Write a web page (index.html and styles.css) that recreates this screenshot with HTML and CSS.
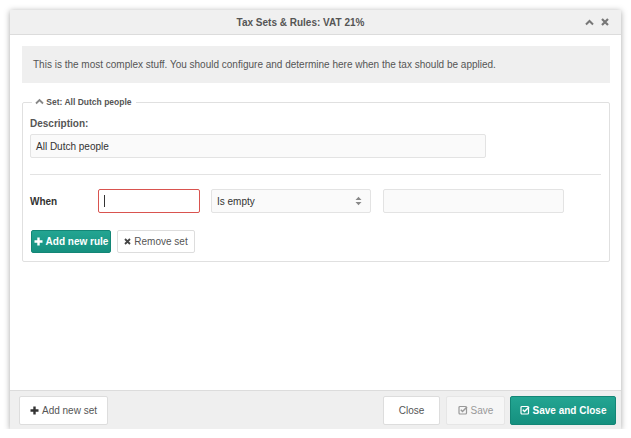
FILE: index.html
```html
<!DOCTYPE html>
<html>
<head>
<meta charset="utf-8">
<link rel="stylesheet" href="styles.css">
</head>
<body>
<div class="dialog">
  <div class="dlg-header">
    <span class="dlg-title">Tax Sets &amp; Rules: VAT 21%</span>
    <span class="dlg-tools">
      <svg width="9" height="7" viewBox="0 0 9 7"><path d="M1 5.5 L4.5 2 L8 5.5" fill="none" stroke="#777" stroke-width="2"/></svg>
      <svg width="8" height="8" viewBox="0 0 8 8"><path d="M1 1 L7 7 M7 1 L1 7" stroke="#777" stroke-width="2.2"/></svg>
    </span>
  </div>
  <div class="dlg-body">
    <div class="info">This is the most complex stuff. You should configure and determine here when the tax should be applied.</div>
    <fieldset class="set">
      <legend><svg width="9" height="7" viewBox="0 0 9 7"><path d="M1 5.5 L4.5 2 L8 5.5" fill="none" stroke="#888" stroke-width="1.8"/></svg> Set: All Dutch people</legend>
      <div class="label">Description:</div>
      <div class="input desc">All Dutch people</div>
      <div class="sep"></div>
      <div class="rule">
        <div class="when">When</div>
        <div class="input field error"><span class="caret"></span></div>
        <div class="input select">Is empty
          <svg class="arrows" width="7" height="10" viewBox="0 0 7 10"><path d="M0.5 4 L3.5 0.8 L6.5 4 Z M0.5 6 L3.5 9.2 L6.5 6 Z" fill="#888"/></svg>
        </div>
        <div class="input value"></div>
      </div>
      <div class="actions">
        <button class="btn teal small addrule"><svg width="9" height="9" viewBox="0 0 9 9"><path d="M4.5 0.5 V8.5 M0.5 4.5 H8.5" stroke="#fff" stroke-width="2.4"/></svg> Add new rule</button>
        <button class="btn plain small removeset"><svg width="7" height="7" viewBox="0 0 7 7"><path d="M1 1 L6 6 M6 1 L1 6" stroke="#444" stroke-width="1.8"/></svg> Remove set</button>
      </div>
    </fieldset>
  </div>
  <div class="dlg-footer">
    <button class="btn plain big addset"><svg width="9" height="9" viewBox="0 0 9 9"><path d="M4.5 0.5 V8.5 M0.5 4.5 H8.5" stroke="#333" stroke-width="2.4"/></svg> Add new set</button>
    <div class="spacer"></div>
    <button class="btn plain big close">Close</button>
    <button class="btn disabled big save"><svg width="10" height="10" viewBox="0 0 10 10"><rect x="1" y="1.5" width="7.5" height="7.5" rx="1" fill="none" stroke="#999" stroke-width="1.2"/><path d="M2.8 4.8 L4.5 6.5 L9 2" fill="none" stroke="#999" stroke-width="1.5"/></svg> Save</button>
    <button class="btn teal big saveclose"><svg width="10" height="10" viewBox="0 0 10 10"><rect x="1" y="1.5" width="7.5" height="7.5" rx="1" fill="none" stroke="#fff" stroke-width="1.2"/><path d="M2.8 4.8 L4.5 6.5 L9 2" fill="none" stroke="#fff" stroke-width="1.5"/></svg> Save and Close</button>
  </div>
</div>
</body>
</html>
```
FILE: styles.css
```css
html, body {
  margin: 0;
  padding: 0;
  background: #fff;
  font-family: "Liberation Sans", Arial, sans-serif;
  color: #555;
}
.dialog {
  margin: 10px 0 0 10px;
  width: 611px;
  height: 419px;
  display: flex;
  flex-direction: column;
  box-shadow: 0 1px 6px rgba(0,0,0,0.35);
  background: #fff;
}
.dlg-header {
  height: 24px;
  background: #f0f0f0;
  border-bottom: 1px solid #dcdcdc;
  display: flex;
  align-items: center;
  justify-content: center;
  position: relative;
  padding-right: 30px;
}
.dlg-title {
  font-size: 10px;
  font-weight: bold;
  color: #555;
}
.dlg-tools {
  position: absolute;
  right: 12px;
  top: 8px;
  display: flex;
  gap: 7px;
  align-items: center;
}
.dlg-body {
  flex: 1;
  padding: 11px 11px 0 12px;
}
.info {
  height: 37px;
  line-height: 37px;
  background: #efefef;
  padding: 0 11px;
  font-size: 10px;
  color: #555;
}
.set {
  margin: 14px 0 0 0;
  border: 1px solid #e0e0e0;
  border-radius: 2px;
  padding: 0 8px 8px 7px;
}
.set legend {
  font-size: 8.5px;
  font-weight: bold;
  color: #555;
  padding: 0 4px 0 3px;
  margin-left: 2px;
}
.label {
  font-size: 10px;
  font-weight: bold;
  color: #555;
  margin-top: 10px;
  line-height: 13px;
}
.input {
  box-sizing: border-box;
  height: 24px;
  border: 1px solid #e3e3e3;
  border-radius: 2px;
  background: #fafafa;
  font-size: 10px;
  color: #333;
  display: flex;
  align-items: center;
  padding: 0 5px;
}
.desc {
  width: 456px;
  margin-top: 4px;
}
.sep {
  height: 1px;
  background: #e3e3e3;
  margin: 16px 0 0 0;
}
.rule {
  display: flex;
  align-items: center;
  margin-top: 14px;
}
.when {
  width: 68px;
  font-size: 10px;
  font-weight: bold;
  color: #333;
}
.field {
  width: 102px;
  margin-right: 11px;
}
.error {
  border: 1px solid #d9534f;
  background: #fff;
}
.caret {
  display: block;
  width: 1px;
  height: 12px;
  background: #333;
}
.select {
  width: 160px;
  margin-right: 12px;
  justify-content: space-between;
  padding-right: 8px;
}
.value {
  width: 181px;
}
.actions {
  display: flex;
  gap: 6px;
  margin-top: 17px;
  margin-left: 1px;
}
.btn {
  box-sizing: border-box;
  font-family: "Liberation Sans", Arial, sans-serif;
  border-radius: 2px;
  display: flex;
  align-items: center;
  justify-content: center;
  gap: 3px;
  cursor: pointer;
  white-space: nowrap;
  padding: 0;
}
.small {
  height: 23px;
  font-size: 10px;
}
.big {
  height: 29px;
  font-size: 10px;
}
.addrule { width: 80px; }
.removeset { width: 78px; }
.teal {
  background: linear-gradient(#23a592, #15907f);
  border: 1px solid #138676;
  color: #fff;
  font-weight: bold;
}
.plain {
  background: #fff;
  border: 1px solid #ddd;
  color: #555;
}
.disabled {
  background: #f6f6f6;
  border: 1px solid #e6e6e6;
  color: #999;
}
.dlg-footer {
  height: 39px;
  background: #efefef;
  border-top: 1px solid #dcdcdc;
  box-sizing: border-box;
  display: flex;
  align-items: center;
  padding: 0 5px 0 9px;
}
.spacer { flex: 1; }
.addset { width: 89px; }
.close { width: 57px; margin-right: 6px; }
.save { width: 59px; margin-right: 5px; }
.saveclose { width: 106px; }
```
